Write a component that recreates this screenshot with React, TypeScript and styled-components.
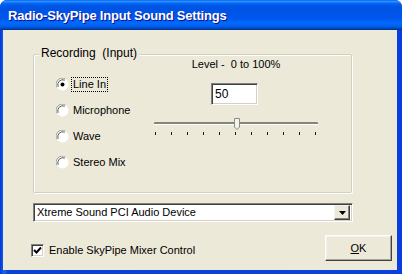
import React from "react";
import styled, { createGlobalStyle } from "styled-components";

const Global = createGlobalStyle`
  html, body { margin: 0; padding: 0; background: #ffffff; }
  body { width: 402px; height: 274px; overflow: hidden; }
`;

const Window = styled.div`
  width: 402px;
  height: 274px;
  box-sizing: border-box;
  display: flex;
  flex-direction: column;
  border-radius: 7px 7px 0 0;
  overflow: hidden;
  background: #0831d9;
`;

const TitleBar = styled.div`
  height: 30px;
  flex: none;
  display: flex;
  align-items: center;
  padding-left: 8px;
  padding-top: 1px;
  box-sizing: border-box;
  background: linear-gradient(
    to bottom,
    #0058ee 0%,
    #3593ff 4%,
    #288eff 6%,
    #127dff 8%,
    #036ffc 10%,
    #0262ee 14%,
    #0057e5 20%,
    #0054e3 24%,
    #0055eb 56%,
    #005bf5 66%,
    #026afe 76%,
    #0062ef 86%,
    #0052d6 92%,
    #0040ab 96%,
    #003092 100%
  );
  color: #ffffff;
  font: bold 13px "Liberation Sans", Arial, sans-serif;
  letter-spacing: -0.2px;
  text-shadow: 1px 1px 0 #0f1089;
`;

const Frame = styled.div`
  flex: 1;
  display: flex;
  padding: 0 5px 4px 3px;
  background: linear-gradient(to right, #0831d9 0%, #166aee 1%, #0841d8 2%, #0842dc 97%, #0a3ce0 100%);
`;

const Client = styled.div`
  flex: 1;
  background: #ece9d8;
  display: flex;
  flex-direction: column;
  padding-left: 30px;
  font: 11px "Liberation Sans", Arial, sans-serif;
  color: #000000;
`;

const GroupBox = styled.div`
  position: relative;
  margin-top: 24px;
  width: 319px;
  height: 139px;
  box-sizing: border-box;
  border: 1px solid #d0d0bf;
  border-radius: 2px;
  box-shadow: inset 1px 1px 0 #ffffff, 1px 1px 0 #ffffff;
  display: grid;
  grid-template-columns: 98px 164px;
  padding-left: 22px;
  align-items: start;
`;

const Legend = styled.span`
  position: absolute;
  left: 5px;
  top: -9px;
  padding: 0 2px;
  background: #ece9d8;
  font-size: 12px;
  line-height: 14px;
  white-space: pre;
`;

const RadioList = styled.div`
  margin-top: 16px;
  display: flex;
  flex-direction: column;
`;

const RadioRow = styled.label`
  height: 26px;
  display: flex;
  align-items: center;
  white-space: nowrap;
`;

const RadioLabel = styled.span<{ $focused?: boolean }>`
  margin-left: 2px;
  padding: 0 1px;
  line-height: 13px;
  border: 1px dotted ${(p) => (p.$focused ? "#000000" : "transparent")};
`;

const LevelColumn = styled.div`
  margin-top: 3px;
  display: flex;
  flex-direction: column;
  align-items: center;
`;

const LevelCaption = styled.div`
  line-height: 13px;
  white-space: pre;
`;

const TextBox = styled.div`
  margin-top: 12px;
  margin-left: -3px;
  width: 47px;
  height: 22px;
  box-sizing: border-box;
  background: #ffffff;
  border: 1px solid;
  border-color: #808080 #ffffff #ffffff #808080;
  box-shadow: inset 1px 1px 0 #404040, inset -1px -1px 0 #d4d0c8;
  padding: 3px 0 0 3px;
  font-size: 12px;
  line-height: 14px;
`;

const Slider = styled.div`
  position: relative;
  margin-top: 12px;
  width: 164px;
  height: 19px;
`;

const Track = styled.div`
  position: absolute;
  left: 0;
  right: 0;
  top: 5px;
  height: 3px;
  box-sizing: border-box;
  border-top: 2px solid #84837c;
  border-bottom: 1px solid #ffffff;
  border-radius: 1px;
`;

const Thumb = styled.svg`
  position: absolute;
  left: 80px;
  top: 1px;
`;

const Ticks = styled.div`
  position: absolute;
  left: 1px;
  top: 15px;
  width: 161px;
  display: flex;
  justify-content: space-between;
`;

const Tick = styled.span`
  width: 1px;
  height: 3px;
  background: #1a1a1a;
`;

const Combo = styled.div`
  margin-top: 10px;
  width: 320px;
  height: 19px;
  box-sizing: border-box;
  background: #ffffff;
  border: 1px solid;
  border-color: #808080 #ffffff #ffffff #808080;
  box-shadow: inset 1px 1px 0 #404040, inset -1px -1px 0 #d4d0c8;
  display: flex;
  align-items: center;
  padding: 1px 2px 1px 3px;
`;

const ComboText = styled.span`
  flex: 1;
  line-height: 13px;
  white-space: nowrap;
`;

const DropButton = styled.div`
  width: 16px;
  height: 15px;
  box-sizing: border-box;
  background: #ece9d8;
  border: 1px solid;
  border-color: #f4f3ee #404040 #404040 #f4f3ee;
  box-shadow: inset -1px -1px 0 #808080;
  display: flex;
  align-items: center;
  justify-content: center;
`;

const Footer = styled.div`
  margin-top: 13px;
  margin-left: -2px;
  display: flex;
  align-items: flex-start;
`;

const CheckRow = styled.label`
  margin-top: 9px;
  display: flex;
  align-items: center;
  white-space: nowrap;
  flex: 1;
`;

const CheckBox = styled.span`
  width: 13px;
  height: 13px;
  box-sizing: border-box;
  background: #ffffff;
  border: 1px solid;
  border-color: #808080 #ffffff #ffffff #808080;
  box-shadow: inset 1px 1px 0 #404040, inset -1px -1px 0 #d4d0c8;
  display: flex;
  align-items: center;
  justify-content: center;
`;

const CheckLabel = styled.span`
  margin-left: 5px;
  line-height: 13px;
`;

const Button = styled.button`
  margin-right: 5px;
  width: 67px;
  height: 26px;
  box-sizing: border-box;
  background: #ece9d8;
  border: 1px solid;
  border-color: #ffffff #404040 #404040 #ffffff;
  box-shadow: inset -1px -1px 0 #a8a698, inset 1px 1px 0 #f4f3ee;
  font: 11px "Liberation Sans", Arial, sans-serif;
  color: #000000;
  padding: 0;
  u { text-decoration: underline; }
`;

const RadioIcon: React.FC<{ checked?: boolean }> = ({ checked }) => (
  <svg width="13" height="13" viewBox="0 0 13 13">
    <circle cx="6.5" cy="6.5" r="6" fill="#ffffff" />
    <path d="M1.2 9.5 A6 6 0 0 1 9.5 1.2" stroke="#9a9a92" strokeWidth="1" fill="none" />
    <path d="M2.2 8.8 A5 5 0 0 1 8.8 2.2" stroke="#5a5a55" strokeWidth="1" fill="none" />
    <path d="M9.5 1.2 A6 6 0 0 1 1.2 9.5" stroke="#ffffff" strokeWidth="1" fill="none" />
    {checked && <circle cx="6.5" cy="6.5" r="2" fill="#000000" />}
  </svg>
);

const radios = [
  { label: "Line In", checked: true },
  { label: "Microphone" },
  { label: "Wave" },
  { label: "Stereo Mix" },
];

export default function App() {
  return (
    <>
      <Global />
      <Window>
        <TitleBar>Radio-SkyPipe Input Sound Settings</TitleBar>
        <Frame>
          <Client>
            <GroupBox>
              <Legend>{"Recording  (Input)"}</Legend>
              <RadioList>
                {radios.map((r) => (
                  <RadioRow key={r.label}>
                    <RadioIcon checked={r.checked} />
                    <RadioLabel $focused={r.checked}>{r.label}</RadioLabel>
                  </RadioRow>
                ))}
              </RadioList>
              <LevelColumn>
                <LevelCaption>{"Level -  0 to 100%"}</LevelCaption>
                <TextBox>50</TextBox>
                <Slider>
                  <Track />
                  <Thumb width="6" height="12" viewBox="0 0 6 12">
                    <path d="M0.5 0.5 H5.5 V9 L3 11.5 L0.5 9 Z" fill="#f4f3ee" stroke="#8b8a84" />
                  </Thumb>
                  <Ticks>
                    {Array.from({ length: 11 }).map((_, i) => (
                      <Tick key={i} />
                    ))}
                  </Ticks>
                </Slider>
              </LevelColumn>
            </GroupBox>
            <Combo>
              <ComboText>Xtreme Sound PCI Audio Device</ComboText>
              <DropButton>
                <svg width="7" height="4" viewBox="0 0 7 4">
                  <path d="M0 0 H7 L3.5 4 Z" fill="#000000" />
                </svg>
              </DropButton>
            </Combo>
            <Footer>
              <CheckRow>
                <CheckBox>
                  <svg width="9" height="9" viewBox="0 0 9 9">
                    <path d="M1 4 L3.5 6.5 L8 1.5" stroke="#000000" strokeWidth="2" fill="none" />
                  </svg>
                </CheckBox>
                <CheckLabel>Enable SkyPipe Mixer Control</CheckLabel>
              </CheckRow>
              <Button>
                <u>O</u>K
              </Button>
            </Footer>
          </Client>
        </Frame>
      </Window>
    </>
  );
}
